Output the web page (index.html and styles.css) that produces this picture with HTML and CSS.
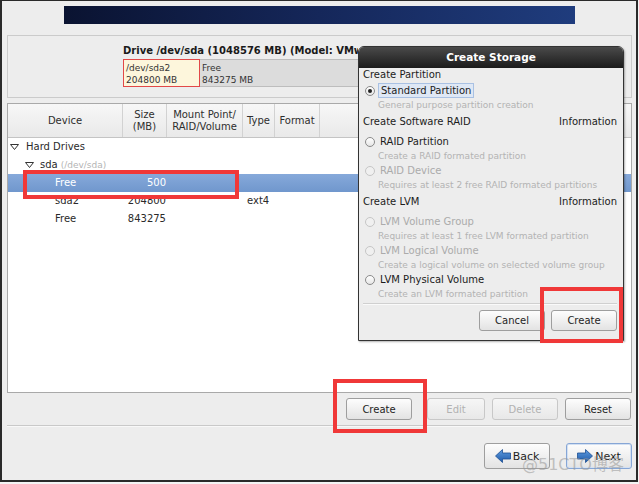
FILE: index.html
```html
<!DOCTYPE html>
<html>
<head>
    <title>Create Storage</title>
    <link rel="stylesheet" href="styles.css">
</head>
<body>
    <div class="screen">
        <div class="banner"></div>

        <div class="drive-panel">
            <div class="drive-title">Drive /dev/sda (1048576 MB) (Model: VMware, VMware Virtual S (scsi))</div>
            <div class="drive-bar">
                <div class="seg seg-used">/dev/sda2<br>204800 MB</div>
                <div class="seg seg-free">Free<br>843275 MB</div>
            </div>
        </div>

        <div class="tree">
            <div class="tree-head">
                <div class="th">Device</div>
                <div class="th">Size<br>(MB)</div>
                <div class="th">Mount Point/<br>RAID/Volume</div>
                <div class="th">Type</div>
                <div class="th">Format</div>
                <div class="th th-last"></div>
            </div>
            <div class="row">
                <div class="cell lvl0"><svg class="exp" width="9" height="8" viewBox="0 0 9 8"><polygon points="0.5,1.5 8.5,1.5 4.5,6.5" fill="#fff" stroke="#333" stroke-width="1"/></svg>Hard Drives</div>
                <div class="cell"></div><div class="cell"></div><div class="cell"></div><div class="cell"></div><div class="cell"></div>
            </div>
            <div class="row">
                <div class="cell lvl1"><svg class="exp" width="9" height="8" viewBox="0 0 9 8"><polygon points="0.5,1.5 8.5,1.5 4.5,6.5" fill="#fff" stroke="#333" stroke-width="1"/></svg>sda <span class="dev-path">(/dev/sda)</span></div>
                <div class="cell"></div><div class="cell"></div><div class="cell"></div><div class="cell"></div><div class="cell"></div>
            </div>
            <div class="row row-selected">
                <div class="cell lvl2">Free</div>
                <div class="cell size">500</div>
                <div class="cell"></div><div class="cell"></div><div class="cell"></div><div class="cell"></div>
            </div>
            <div class="row">
                <div class="cell lvl2">sda2</div>
                <div class="cell size">204800</div>
                <div class="cell"></div>
                <div class="cell type">ext4</div>
                <div class="cell"></div><div class="cell"></div>
            </div>
            <div class="row">
                <div class="cell lvl2">Free</div>
                <div class="cell size">843275</div>
                <div class="cell"></div><div class="cell"></div><div class="cell"></div><div class="cell"></div>
            </div>
        </div>

        <div class="actions">
            <button class="btn btn-create">Create</button>
            <button class="btn btn-edit" disabled>Edit</button>
            <button class="btn" disabled>Delete</button>
            <button class="btn">Reset</button>
        </div>

        <div class="sep"></div>

        <div class="nav">
            <button class="btn nav-btn">
                <svg width="16" height="14" viewBox="0 0 16 14"><defs><linearGradient id="ag" x1="0" y1="0" x2="0" y2="1"><stop offset="0" stop-color="#5d9be0"/><stop offset="1" stop-color="#1f5aa8"/></linearGradient></defs><polygon points="0.5,7 7.5,0.5 7.5,4 15.5,4 15.5,10 7.5,10 7.5,13.5" fill="url(#ag)" stroke="#1d4f93" stroke-width="0.8"/></svg>Back
            </button>
            <button class="btn nav-btn nav-next">
                <svg width="16" height="14" viewBox="0 0 16 14"><polygon points="15.5,7 8.5,0.5 8.5,4 0.5,4 0.5,10 8.5,10 8.5,13.5" fill="url(#ag)" stroke="#1d4f93" stroke-width="0.8"/></svg>Next
            </button>
        </div>
    </div>

    <!-- Create Storage dialog over the main window -->
    <div class="dialog">
        <div class="dialog-title">Create Storage</div>
        <div class="dialog-body">
            <div class="group">Create Partition</div>
            <div class="option opt-first"><span class="radio checked"></span><span class="focus">Standard Partition</span></div>
            <div class="desc">General purpose partition creation</div>

            <div class="group"><span>Create Software RAID</span><span>Information</span></div>
            <div class="option opt-after"><span class="radio"></span>RAID Partition</div>
            <div class="desc">Create a RAID formated partition</div>
            <div class="option disabled"><span class="radio"></span>RAID Device</div>
            <div class="desc">Requires at least 2 free RAID formated partitions</div>

            <div class="group"><span>Create LVM</span><span>Information</span></div>
            <div class="option opt-after disabled"><span class="radio"></span>LVM Volume Group</div>
            <div class="desc">Requires at least 1 free LVM formated partition</div>
            <div class="option disabled"><span class="radio"></span>LVM Logical Volume</div>
            <div class="desc">Create a logical volume on selected volume group</div>
            <div class="option"><span class="radio"></span>LVM Physical Volume</div>
            <div class="desc">Create an LVM formated partition</div>

            <div class="dialog-sep"></div>
            <div class="dialog-actions">
                <button class="btn">Cancel</button>
                <button class="btn">Create</button>
            </div>
        </div>
    </div>

    <!-- red annotation boxes -->
    <div class="mark mark-row"></div>
    <div class="mark mark-dialog"></div>
    <div class="mark mark-create"></div>

    <div class="watermark">@51CTO博客</div>
</body>
</html>
```

FILE: styles.css
```css
body {
    margin: 0;
    position: relative;
    width: 639px;
    height: 484px;
    background: #f4f4f4;
    font-family: "DejaVu Sans", sans-serif;
    font-size: 10px;
    color: #222;
}

.screen {
    box-sizing: border-box;
    width: 638px;
    height: 482px;
    border: 2px solid #2a2a2a;
    border-top-width: 1px;
    background: #ededed;
    padding: 5px 4px 0 5px;
    display: flex;
    flex-direction: column;
}

.banner {
    flex: none;
    margin-left: 57px;
    width: 511px;
    height: 18px;
    background: linear-gradient(to right, #0a1331, #15275a 50%, #1f3c7d);
}

/* drive graphic */
.drive-panel {
    flex: none;
    margin-top: 11px;
    height: 63px;
    box-sizing: border-box;
    border: 1px solid #cbcbcb;
    padding: 8px 12px 0 115px;
}

/* the dialog hides the rest of the title */
.drive-title {
    width: 235px;
    font-weight: bold;
    line-height: 14px;
    color: #1a1a1a;
    white-space: nowrap;
    overflow: hidden;
}

.drive-bar {
    display: flex;
    margin-top: 1px;
}

.seg {
    box-sizing: border-box;
    height: 28px;
    padding: 2px 2px;
    font-size: 9px;
    line-height: 12px;
    color: #333;
}

.seg-used {
    width: 77px;
    border: 1px solid #e24848;
    background: #fdf6dc;
}

.seg-free {
    flex: 1;
    background: #dcdcdc;
    border: 1px solid #bdbdbd;
    border-left: none;
}

/* partition tree */
.tree {
    flex: none;
    margin-top: 5px;
    height: 290px;
    box-sizing: border-box;
    border: 1px solid #a9a9a9;
    background: #fff;
}

.tree-head,
.row {
    display: grid;
    grid-template-columns: 115px 44px 76px 32px 45px 1fr;
}

.tree-head {
    height: 33px;
    border-bottom: 1px solid #c4c4c4;
    background: linear-gradient(#f7f7f7, #e9e9e9);
}

.th {
    display: flex;
    align-items: center;
    justify-content: center;
    text-align: center;
    line-height: 12px;
    color: #2e2e2e;
    border-right: 1px solid #d2d2d2;
}

.th-last {
    border-right: none;
}

.row {
    height: 18px;
    line-height: 18px;
    color: #2a2a2a;
}

.row-selected {
    background: linear-gradient(#86a9da, #7097cd);
    color: #fff;
}

.cell {
    white-space: nowrap;
    display: flex;
    align-items: center;
}

.lvl0 {
    padding-left: 2px;
}

.lvl1 {
    padding-left: 17px;
}

.lvl2 {
    padding-left: 47px;
}

.exp {
    margin-right: 7px;
}

.lvl1 .exp {
    margin-right: 6px;
}

.dev-path {
    font-size: 9px;
    color: #b4b4b4;
    margin-left: 3px;
}

.size {
    justify-content: flex-end;
    padding-right: 1px;
}

.type {
    padding-left: 4px;
}

/* buttons */
.btn {
    box-sizing: border-box;
    height: 22px;
    width: 66px;
    padding: 0;
    font-family: "DejaVu Sans", sans-serif;
    font-size: 10px;
    color: #1e1e1e;
    background: linear-gradient(#fdfdfd, #e3e3e3);
    border: 1px solid #9e9e9e;
    border-radius: 3px;
}

.btn:disabled {
    color: #b2b2b2;
    border-color: #c8c8c8;
    background: linear-gradient(#f6f6f6, #e8e8e8);
}

.actions {
    flex: none;
    display: flex;
    justify-content: flex-end;
    gap: 7px;
    margin-top: 5px;
    padding-right: 1px;
}

.btn-create {
    margin-right: 8px;
}

.btn-edit {
    width: 58px;
}

.sep {
    flex: none;
    height: 1px;
    margin-top: 5px;
    background: #c9c9c9;
    border-bottom: 1px solid #f8f8f8;
}

.nav {
    flex: none;
    display: flex;
    justify-content: flex-end;
    gap: 16px;
    margin-top: 16px;
}

.nav-btn {
    height: 26px;
    display: flex;
    align-items: center;
    justify-content: center;
    gap: 2px;
    font-size: 11px;
}

.nav-next {
    border-color: #86a6d6;
    box-shadow: inset 0 0 0 1px #d3e0f2;
}

/* dialog */
.dialog {
    position: absolute;
    left: 358px;
    top: 46px;
    width: 266px;
    box-sizing: border-box;
    border: 1px solid #333;
    border-radius: 6px 6px 0 0;
    background: #ededed;
    box-shadow: 1px 1px 2px rgba(0, 0, 0, 0.3);
}

.dialog-title {
    height: 21px;
    line-height: 21px;
    text-align: center;
    font-weight: bold;
    font-size: 10.5px;
    color: #fff;
    background: linear-gradient(#4a4a4a, #1b1b1b);
    border-radius: 5px 5px 0 0;
}

.dialog-body {
    padding: 0 6px 9px 4px;
}

.group {
    display: flex;
    justify-content: space-between;
    line-height: 14px;
    margin-top: 3px;
    color: #1c1c1c;
}

.group:first-child {
    margin-top: 0;
}

.option {
    display: flex;
    align-items: center;
    height: 15px;
    color: #1c1c1c;
}

.opt-first {
    margin-top: 1px;
}

.opt-after {
    margin-top: 5px;
}

.option.disabled {
    color: #ababab;
}

.radio {
    box-sizing: border-box;
    width: 10px;
    height: 10px;
    margin: 0 5px 0 2px;
    border: 1px solid #8a8a8a;
    border-radius: 50%;
    background: linear-gradient(#ffffff, #e6e6e6);
    display: flex;
    align-items: center;
    justify-content: center;
}

.disabled .radio {
    border-color: #c6c6c6;
    background: #f0f0f0;
}

.radio.checked::after {
    content: "";
    width: 4px;
    height: 4px;
    border-radius: 50%;
    background: #222;
}

.focus {
    padding: 1px 2px;
    margin-left: -2px;
    border: 1px solid #a9c1e3;
    background: #dfe8f5;
}

.desc {
    line-height: 14px;
    padding-left: 15px;
    font-size: 9px;
    color: #b3b3b3;
    white-space: nowrap;
}

.dialog-sep {
    height: 1px;
    margin-top: 2px;
    background: #d0d0d0;
    border-bottom: 1px solid #fafafa;
}

.dialog-actions {
    display: flex;
    justify-content: flex-end;
    gap: 6px;
    margin-top: 5px;
}

.dialog-actions .btn {
    height: 21px;
}

/* red annotation rectangles */
.mark {
    position: absolute;
    box-sizing: border-box;
    border: 4px solid #f03838;
}

.mark-row {
    left: 23px;
    top: 170px;
    width: 216px;
    height: 29px;
}

.mark-dialog {
    left: 540px;
    top: 287px;
    width: 83px;
    height: 56px;
}

.mark-create {
    left: 333px;
    top: 379px;
    width: 94px;
    height: 54px;
}

.watermark {
    position: absolute;
    left: 522px;
    top: 451px;
    font-family: "DejaVu Sans", "Noto Sans CJK SC", sans-serif;
    font-size: 16px;
    color: rgba(150, 150, 150, 0.55);
    white-space: nowrap;
}
```
